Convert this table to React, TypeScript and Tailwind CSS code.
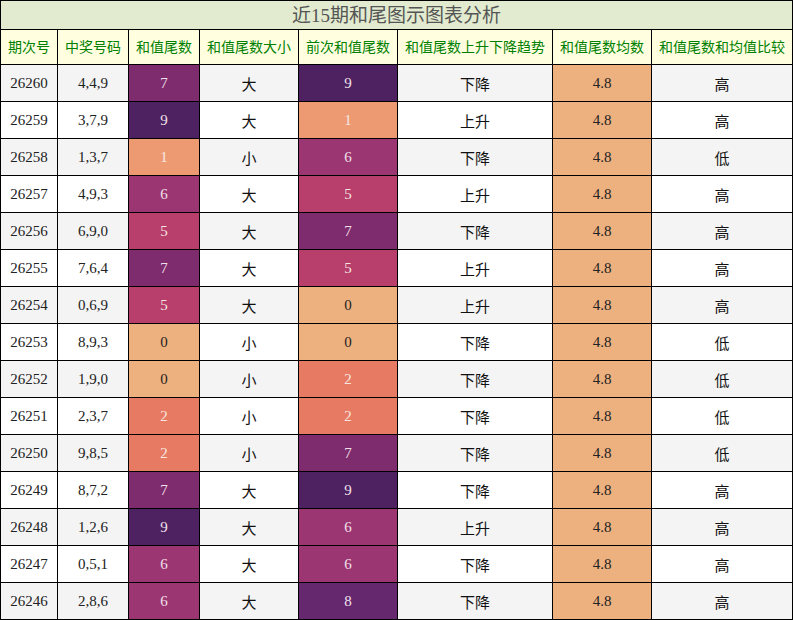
const rows: [string, string, number, string, number, string, string][] = [
  ["26260", "4,4,9", 7, "大", 9, "下降", "高"],
  ["26259", "3,7,9", 9, "大", 1, "上升", "高"],
  ["26258", "1,3,7", 1, "小", 6, "下降", "低"],
  ["26257", "4,9,3", 6, "大", 5, "上升", "高"],
  ["26256", "6,9,0", 5, "大", 7, "下降", "高"],
  ["26255", "7,6,4", 7, "大", 5, "上升", "高"],
  ["26254", "0,6,9", 5, "大", 0, "上升", "高"],
  ["26253", "8,9,3", 0, "小", 0, "下降", "低"],
  ["26252", "1,9,0", 0, "小", 2, "下降", "低"],
  ["26251", "2,3,7", 2, "小", 2, "下降", "低"],
  ["26250", "9,8,5", 2, "小", 7, "下降", "低"],
  ["26249", "8,7,2", 7, "大", 9, "下降", "高"],
  ["26248", "1,2,6", 9, "大", 6, "上升", "高"],
  ["26247", "0,5,1", 6, "大", 6, "下降", "高"],
  ["26246", "2,8,6", 6, "大", 8, "下降", "高"],
];

const heads = ["期次号", "中奖号码", "和值尾数", "和值尾数大小", "前次和值尾数", "和值尾数上升下降趋势", "和值尾数均数", "和值尾数和均值比较"];

// heat colours, magma-like
const heat: Record<number, string> = {
  0: "bg-[#edb07f] text-[#222]",
  1: "bg-[#ed9a73] text-[#f6e8e0]",
  2: "bg-[#e67a63] text-[#f6e8e0]",
  3: "bg-[#d65a62] text-[#f6e8e0]",
  4: "bg-[#c84866] text-[#f6e8e0]",
  5: "bg-[#b83e6b] text-[#f6e8e0]",
  6: "bg-[#9c3672] text-[#f0e0ea]",
  7: "bg-[#7f2c6e] text-[#f0e0ea]",
  8: "bg-[#65286f] text-[#f0e0ea]",
  9: "bg-[#4e2160] text-[#f0e0ea]",
};

const cell = "flex items-center justify-center border-r border-b border-black";

export default function App() {
  return (
    <div className="w-[793px] h-[620px] bg-white font-['Liberation_Serif','Noto_Sans_CJK_SC',serif]">
      <div className="grid grid-cols-[57px_71px_71px_99px_99px_155px_99px_141px] grid-rows-[29px_35px_repeat(15,37px)] border-l border-t border-black">
        <div className={`${cell} col-span-8 bg-[#e2ebcf] text-[19px] text-[#555] pt-[2px]`}>近15期和尾图示图表分析</div>
        {heads.map((h) => (
          <div key={h} className={`${cell} bg-[#ffffe0] text-[14px] text-[#008000] font-['Noto_Sans_CJK_SC',sans-serif] pb-[2px]`}>{h}</div>
        ))}
        {rows.map((r, i) => {
          const bg = i % 2 === 0 ? "bg-[#f4f4f4]" : "bg-white";
          const cjk = "font-['Noto_Sans_CJK_SC',sans-serif] text-[15px] text-[#111] pt-[3px]";
          return [
            <div key={r[0] + "a"} className={`${cell} ${bg} text-[15px] text-[#222]`}>{r[0]}</div>,
            <div key={r[0] + "b"} className={`${cell} ${bg} text-[15px] text-[#222]`}>{r[1]}</div>,
            <div key={r[0] + "c"} className={`${cell} ${heat[r[2]]} text-[15px]`}>{r[2]}</div>,
            <div key={r[0] + "d"} className={`${cell} ${bg} ${cjk}`}>{r[3]}</div>,
            <div key={r[0] + "e"} className={`${cell} ${heat[r[4]]} text-[15px]`}>{r[4]}</div>,
            <div key={r[0] + "f"} className={`${cell} ${bg} ${cjk}`}>{r[5]}</div>,
            <div key={r[0] + "g"} className={`${cell} bg-[#edb07f] text-[15px] text-[#222]`}>4.8</div>,
            <div key={r[0] + "h"} className={`${cell} ${bg} ${cjk}`}>{r[6]}</div>,
          ];
        })}
      </div>
    </div>
  );
}
